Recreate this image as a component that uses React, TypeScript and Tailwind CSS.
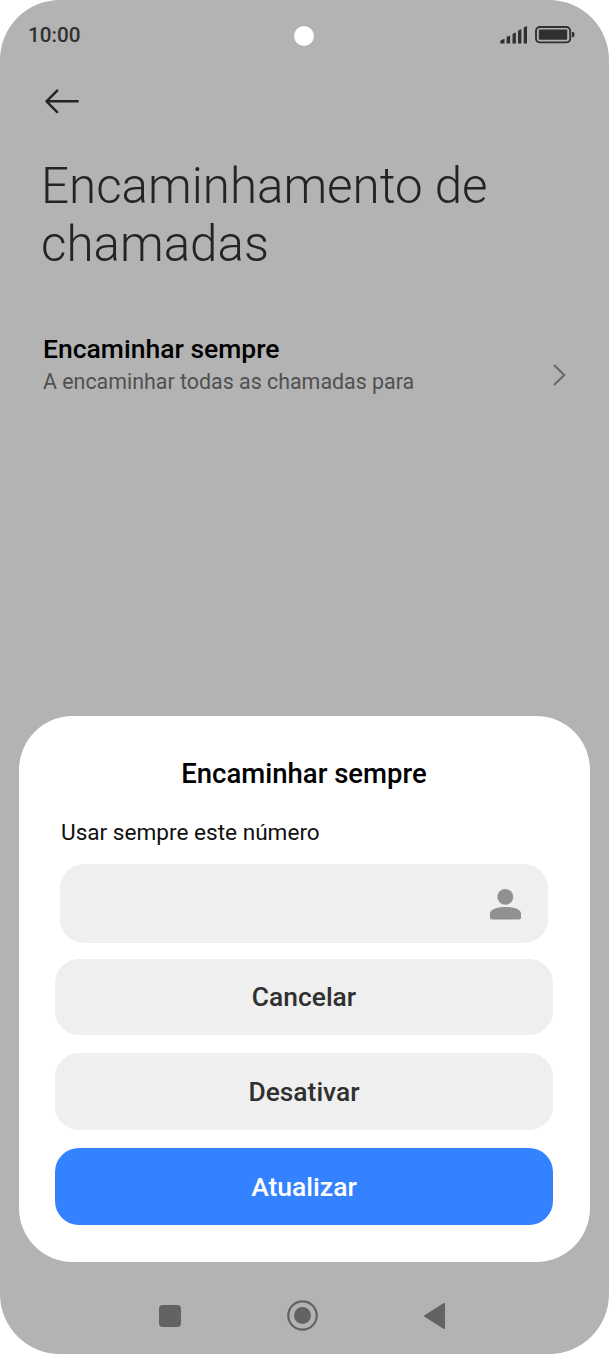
import { useState } from "react";

const ACTIONS = ["Cancelar", "Desativar"];

function StatusBar() {
  return (
    <header className="grid h-[70px] grid-cols-[266px_20px_1fr] items-center pl-7 pr-[34px]">
      <span className="text-[20.7px] font-medium leading-6 text-[#303030]">10:00</span>
      <span className="mt-0.5 size-5 rounded-full bg-white" />
      <div className="flex items-center justify-end gap-2">
        <svg width="27" height="18" viewBox="0 0 27 18" fill="#303030">
          <path d="M.3 17.5v-2q0-1 1-1.5l3.2-1.2v4.7zM6.6 17.5V12q0-1 .8-1.4l2.7-1v7.9zM12.5 17.5V9q0-1 .8-1.4l2.6-1v10.9zM18 17.5V5.7q0-1 .8-1.4L21.400 3v14.500zM23.700 17.500V2.500q0-1 .8-1.400L27 0v17.500z" />
        </svg>
        <svg width="40" height="18" viewBox="0 0 40 18" fill="#303030">
          <rect x="1" y="1" width="34.2" height="15.4" rx="4" fill="none" stroke="#303030" strokeWidth="1.9" />
          <rect x="3.8" y="3.6" width="28.4" height="10.2" rx="1" />
          <path d="M36.900 6h1q1.500 0 1.500 1.400v2.400q0 1.400-1.500 1.400h-1z" />
        </svg>
      </div>
    </header>
  );
}

function NavBar() {
  return (
    <nav className="flex h-[92px] items-center pl-[159px] pt-[15px] text-[#636363]">
      <svg width="22" height="22" viewBox="0 0 22 22" fill="currentColor">
        <rect width="22" height="22" rx="4" />
      </svg>
      <svg className="ml-[106px]" width="31" height="31" viewBox="0 0 31 31" fill="currentColor">
        <circle cx="15.5" cy="15.5" r="14.2" fill="none" stroke="currentColor" strokeWidth="2.2" />
        <circle cx="15.5" cy="15.5" r="8.5" />
      </svg>
      <svg className="ml-[106px]" width="21" height="26" viewBox="0 0 21 26" fill="currentColor" stroke="currentColor" strokeWidth="2" strokeLinejoin="round">
        <path d="M20 1v24L1 13z" />
      </svg>
    </nav>
  );
}

export default function App() {
  const [number, setNumber] = useState("");

  return (
    <div className="h-[1354px] w-[609px] bg-white font-['Roboto',sans-serif]">
      <div className="flex h-full flex-col overflow-hidden rounded-[60px] bg-[#b3b3b3]">
        <StatusBar />

        <main className="h-[646px] pl-[41px] pr-[42px]">
          <button aria-label="Voltar" className="mt-[19px] block pl-1">
            <svg width="35" height="25" viewBox="0 0 35 25" fill="none" stroke="#242424" strokeWidth="2.4" strokeLinecap="round" strokeLinejoin="round">
              <path d="M12.2 1.6 1.5 12.3l10.7 10.8M1.5 12.3h31.2" />
            </svg>
          </button>
          <h1 className="mt-[43px] text-[49.3px] font-light leading-[58px] text-[#242424]">
            Encaminhamento de
            <br />
            chamadas
          </h1>
          <button className="mt-[60px] flex w-full items-center justify-between pl-0.5 text-left">
            <div>
              <div className="text-[26.5px] font-medium leading-8 text-black">Encaminhar sempre</div>
              <div className="text-[21.4px] leading-[34px] text-[#505050]">A encaminhar todas as chamadas para</div>
            </div>
            <svg className="mt-[18px]" width="15" height="24" viewBox="0 0 15 24" fill="none" stroke="#6b6b6b" strokeWidth="2.2">
              <path d="m2 2 10.2 10L2 22" />
            </svg>
          </button>
        </main>

        <section role="dialog" className="mx-[19px] h-[546px] rounded-[54px] bg-white pl-9 pr-[37px] pt-10">
          <h2 className="text-center text-[27.5px] font-medium leading-9 text-black">Encaminhar sempre</h2>
          <p className="mt-[25px] pl-[6px] text-[22.6px] leading-8 text-[#101010]">Usar sempre este número</p>
          <div className="mt-[15px] ml-[5px] mr-[5px] flex h-[79px] items-center rounded-3xl bg-[#efefef] pl-6 pr-[27px]">
            <input
              value={number}
              onChange={(e) => setNumber(e.target.value)}
              aria-label="Número"
              className="min-w-0 flex-1 bg-transparent text-[22px] outline-none"
            />
            <svg className="mt-px" width="31" height="31" viewBox="0 0 31 31" fill="#919191">
              <circle cx="15.3" cy="7.9" r="7.9" />
              <path d="M0 24.500C0 20.500 7 18 15.500 18S31 20.500 31 24.500V28.500q0 2-2 2H2q-2 0-2-2z" />
            </svg>
          </div>
          <div className="mt-[15.5px] flex flex-col gap-[18.3px]">
            {ACTIONS.map((label) => (
              <button key={label} className="h-[76.5px] rounded-3xl bg-[#efefef] pt-[3px] text-[26.4px] font-medium text-[#303030]">
                {label}
              </button>
            ))}
            <button className="h-[76.5px] rounded-3xl bg-[#3482ff] pt-0.5 text-[26.5px] font-medium text-white">Atualizar</button>
          </div>
        </section>

        <NavBar />
      </div>
    </div>
  );
}
